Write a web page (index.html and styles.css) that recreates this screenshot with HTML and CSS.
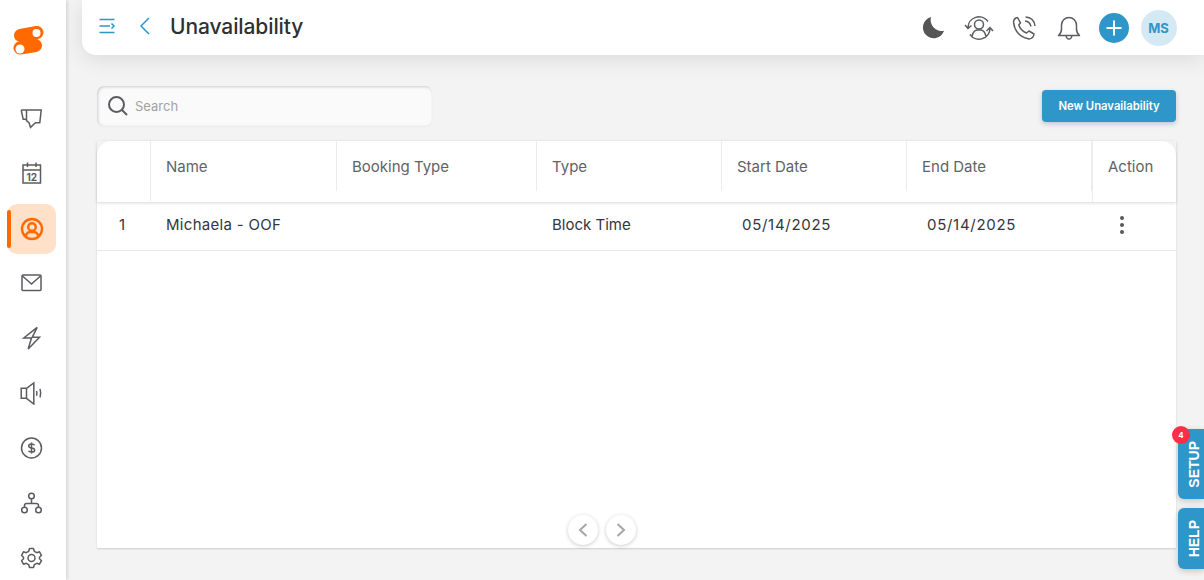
FILE: index.html
```html
<!DOCTYPE html>
<html lang="en">
<head>
<meta charset="utf-8">
<title>Unavailability</title>
<link rel="stylesheet" href="styles.css">
</head>
<body>
<div class="app">
  <nav class="sidebar">
    <div class="logo">
      <svg width="32" height="32" viewBox="0 0 32 32"><path class="logo-s" d="M8.500 10.500 L25 7.500 M8 23 L23.500 20.500"/><circle class="logo-dot" cx="24.500" cy="8" r="4"/><circle class="logo-dot" cx="8" cy="24" r="4.500"/></svg>
    </div>
    <ul class="nav-list">
      <li class="nav-item"><svg class="ic" width="24" height="24" viewBox="0 0 24 24"><path d="M1.200 5 H21.200 L19.800 17.700 H15.500 L10.500 22.300 L9 17.700 L6.500 15.700 V5 M1.200 5 L3.200 14.300 H6.500"/></svg></li>
      <li class="nav-item"><svg class="ic" width="24" height="24" viewBox="0 0 24 24"><rect x="3" y="5" width="17.500" height="18"/><path d="M3 10 H20.500 M7.500 2.500 V7 M16 2.500 V7"/><text class="cal-num" x="11.800" y="20.500">12</text></svg></li>
      <li class="nav-item active"><span class="active-bar"></span><svg class="ic ic-active" width="24" height="24" viewBox="0 0 24 24"><circle cx="12" cy="12" r="10"/><circle cx="12" cy="10" r="3.800"/><path d="M5.500 19.500 Q6.500 15.500 10 15 H14 Q17.500 15.500 18.500 19.500"/></svg></li>
      <li class="nav-item"><svg class="ic" width="24" height="24" viewBox="0 0 24 24"><rect x="2" y="4" width="19" height="15.500" rx="1"/><path d="M2.500 5 L11.500 13 L20.500 5"/></svg></li>
      <li class="nav-item"><svg class="ic" width="24" height="24" viewBox="0 0 24 24"><path d="M17.200 1.300 L3.800 12 H11.500 L8.200 23 L19.500 11.300 H12.200 Z"/></svg></li>
      <li class="nav-item"><svg class="ic" width="24" height="24" viewBox="0 0 24 24"><path d="M1.200 7.300 H6.500 V17.300 H1.200 Z M6.500 7.300 L13.800 2 V23 L6.500 17.300"/><path d="M16.500 10 Q17.500 12.300 16.500 14.800 M20 8 Q21.500 12.300 20 16.500"/></svg></li>
      <li class="nav-item"><svg class="ic" width="24" height="24" viewBox="0 0 24 24"><circle cx="11.500" cy="12" r="10"/><path d="M14.500 9.300 Q14 8 11.500 8 Q8.700 8 8.700 10 Q8.700 11.700 11.500 12 Q14.700 12.400 14.700 14.200 Q14.700 16 11.500 16 Q9 16 8.500 14.800 M11.500 6.500 V17.500"/></svg></li>
      <li class="nav-item"><svg class="ic" width="24" height="24" viewBox="0 0 24 24"><circle cx="11.500" cy="5" r="2.800"/><circle cx="4.500" cy="19" r="2.800"/><circle cx="18.500" cy="19" r="2.800"/><path d="M11.500 8 V12.500 M4.500 16 V14.500 Q4.500 12.500 6.700 12.500 H16.300 Q18.500 12.500 18.500 14.500 V16"/></svg></li>
      <li class="nav-item"><svg class="ic ic-round" width="24" height="24" viewBox="0 0 24 24"><circle cx="11.500" cy="12" r="3.500"/><path d="M9.500 2.500 H13.500 L14.300 5.300 L16.800 6.700 L19.500 5.800 L21.500 9.300 L19.500 11.300 V12.700 L21.500 14.700 L19.500 18.200 L16.800 17.300 L14.300 18.700 L13.500 21.500 H9.500 L8.700 18.700 L6.200 17.300 L3.500 18.200 L1.500 14.700 L3.500 12.700 V11.300 L1.500 9.300 L3.500 5.800 L6.200 6.700 L8.700 5.300 Z"/></svg></li>
    </ul>
  </nav>

  <div class="main">
    <header class="topbar">
      <div class="topbar-left">
        <svg class="ic-blue" width="18" height="18" viewBox="0 0 18 18"><path d="M1.500 2.500 H16.500 M1.500 9 H12 M1.500 15.500 H16.500 M13.500 6.500 L16 9 L13.500 11.500"/></svg>
        <svg class="ic-blue back" width="14" height="20" viewBox="0 0 14 20"><path d="M11 2 L3 10 L11 18"/></svg>
        <h1 class="page-title">Unavailability</h1>
      </div>
      <div class="topbar-right">
        <span class="slot"><svg width="23" height="23" viewBox="0 0 24 24"><path class="moon" d="M9.500 1 A11.500 11.500 0 0 0 23 15.500 A11.300 11.300 0 1 1 9.500 1Z"/></svg></span>
        <span class="slot"><svg class="ic" width="30" height="26" viewBox="0 0 30 26"><circle cx="15" cy="9.500" r="4.500"/><path d="M8 22 Q9 15.500 13 15 H17 Q21 15.500 22 22 M4 13 A11 11 0 0 1 24 6.500 M26 13 A11 11 0 0 1 6 19.500 M1 10 L4 13.500 L7.500 10.500 M22.500 16 L26 12.500 L29 16"/></svg></span>
        <span class="slot"><svg class="ic" width="26" height="26" viewBox="0 0 26 26"><path class="join-round" d="M6.500 2.500 L9.500 7.800 L7.800 10 Q9.500 15.500 15.500 18 L18 16 L23 19 Q22.500 23.500 18 24 Q4 21 2.500 7 Q3 3 6.500 2.500Z"/><path d="M14 6 Q19 6.500 20 11.500 M14.500 2 Q23 2.500 24 11"/></svg></span>
        <span class="slot"><svg class="ic" width="24" height="26" viewBox="0 0 24 26"><path class="join-round" d="M1.500 20.500 H22.500 Q19.500 18 19.500 14 V10 A7.500 7.500 0 0 0 4.500 10 V14 Q4.500 18 1.500 20.500Z M9 20.500 Q9.500 24 12 24 Q14.500 24 15 20.500"/></svg></span>
        <span class="slot"><button class="add-btn" type="button"><svg width="16" height="16" viewBox="0 0 16 16"><path d="M8 0.500 V15.500 M0.500 8 H15.500"/></svg></button></span>
        <span class="slot"><span class="avatar">MS</span></span>
      </div>
    </header>

    <section class="content">
      <div class="toolbar">
        <label class="search">
          <svg class="ic ic-search" width="22" height="22" viewBox="0 0 22 22"><circle cx="9.500" cy="9.500" r="7.500"/><path d="M15 15 L20 20"/></svg>
          <span class="search-text">Search</span>
        </label>
        <button class="primary-btn" type="button">New Unavailability</button>
      </div>

      <div class="table-card">
        <div class="row head">
          <div class="cell c-idx"></div>
          <div class="cell c-name">Name</div>
          <div class="cell c-book">Booking Type</div>
          <div class="cell c-type">Type</div>
          <div class="cell c-date">Start Date</div>
          <div class="cell c-date">End Date</div>
          <div class="cell c-act">Action</div>
        </div>
        <div class="row body">
          <div class="cell c-idx">1</div>
          <div class="cell c-name name-val">Michaela - OOF</div>
          <div class="cell c-book"></div>
          <div class="cell c-type">Block Time</div>
          <div class="cell c-date date-val">05/14/2025</div>
          <div class="cell c-date date-val">05/14/2025</div>
          <div class="cell c-act"><span class="dots"><i></i><i></i><i></i></span></div>
        </div>
        <div class="pager">
          <button class="pager-btn" type="button"><svg width="12" height="16" viewBox="0 0 12 16"><path d="M9.500 2 L3 8 L9.500 14"/></svg></button>
          <button class="pager-btn" type="button"><svg width="12" height="16" viewBox="0 0 12 16"><path d="M2.500 2 L9 8 L2.500 14"/></svg></button>
        </div>
      </div>
    </section>
  </div>

  <button class="side-tab tab-setup" type="button"><span>SETUP</span><b class="badge">4</b></button>
  <button class="side-tab tab-help" type="button"><span>HELP</span></button>
</div>
</body>
</html>
```

FILE: styles.css
```css
* { box-sizing: border-box; }
html, body { margin: 0; height: 100%; overflow: hidden; }
body {
  background: #f3f3f3;
  font-family: Inter, "Open Sans", sans-serif;
  color: #333a42;
}
button { font-family: inherit; border: 0; padding: 0; }

.app { position: relative; display: flex; height: 580px; overflow: hidden; }

svg path, svg circle, svg rect { fill: none; }

.sidebar {
  flex: 0 0 66px;
  background: #fff;
  box-shadow: 1px 0 4px rgba(0, 0, 0, .16);
  z-index: 2;
  padding-top: 25px;
  display: flex;
  flex-direction: column;
}
.logo { display: flex; justify-content: center; padding-right: 11px; height: 32px; margin-bottom: 32px; }
.logo svg .logo-s { stroke: #ff6a00; stroke-width: 13; stroke-linecap: round; }
.logo svg .logo-dot { fill: #fff; }

.nav-list { list-style: none; margin: 0; padding: 0; display: flex; flex-direction: column; }
.nav-item {
  position: relative;
  height: 55px;
  margin: 0 10px 0 7px;
  display: flex;
  align-items: center;
  justify-content: center;
  flex: 0 0 55px;
}
.nav-item.active { background: #ffe0c8; border-radius: 10px; height: 50px; flex-basis: 50px; margin-top: 5px; margin-bottom: 1px; }
.active-bar { position: absolute; left: 0; top: 6px; width: 4px; height: 38px; background: #ff6a00; border-radius: 2px; }

.ic path, .ic circle, .ic rect { stroke: #5a5c60; stroke-width: 1.500; }
.ic-round path, .join-round { stroke-linejoin: round; }
.ic-active path, .ic-active circle { stroke: #ff6a00; stroke-width: 2.400; }
.ic-search path, .ic-search circle { stroke-width: 2; }
.cal-num { font-size: 10px; font-weight: 700; fill: #5a5c60; text-anchor: middle; }

.main { flex: 1; min-width: 0; display: flex; flex-direction: column; }

.topbar {
  margin-left: 16px;
  height: 55px;
  background: #fff;
  border-bottom-left-radius: 14px;
  box-shadow: 0 4px 22px rgba(0, 0, 0, .1);
  display: flex;
  align-items: center;
  justify-content: space-between;
  padding: 0 23px 0 16px;
}
.topbar-left { display: flex; align-items: center; padding-bottom: 3px; }
.ic-blue path { stroke: #2e96c9; stroke-width: 1.500; }
.back { margin-left: 22px; }
.page-title { margin: 0 0 0 18px; font-size: 21px; font-weight: 500; color: #2f3033; letter-spacing: -.1px; }
.topbar-right { display: flex; align-items: center; }
.slot { width: 45px; display: flex; align-items: center; justify-content: center; }
.topbar-right .moon { fill: #555; }
.add-btn { width: 30px; height: 30px; border-radius: 50%; background: #2e96c9; display: flex; align-items: center; justify-content: center; }
.add-btn path { stroke: #fff; stroke-width: 2; }
.avatar { flex: 0 0 36px; height: 36px; border-radius: 50%; background: #d5e9f5; color: #2e96c9; font-size: 13px; font-weight: 700; display: flex; align-items: center; justify-content: center; }

.content { flex: 1; padding: 31px 28px 32px 31px; display: flex; flex-direction: column; min-height: 0; }
.toolbar { display: flex; justify-content: space-between; align-items: center; height: 40px; margin-bottom: 15px; }
.search {
  width: 335px;
  height: 40px;
  display: flex;
  align-items: center;
  gap: 6px;
  padding-left: 10px;
  background: #fafafa;
  border-radius: 7px;
  box-shadow: inset 1px 1px 3px rgba(0, 0, 0, .18), 0 1px 2px rgba(0, 0, 0, .04);
}
.search-text { font-size: 13px; color: #a2a2a2; }
.primary-btn {
  width: 134px;
  height: 32px;
  margin-left: auto;
  background: #2e96c9;
  color: #fff;
  font-size: 11.300px;
  font-weight: 600;
  border-radius: 4px;
  box-shadow: 0 2px 5px rgba(50, 60, 120, .25);
}

.table-card {
  flex: 1;
  position: relative;
  background: #fff;
  border-radius: 14px 14px 0 0;
  box-shadow: 0 1px 2px rgba(0, 0, 0, .16);
  display: flex;
  flex-direction: column;
  min-height: 0;
}
.row { display: flex; }
.head { height: 61px; box-shadow: 0 1px 3px rgba(0, 0, 0, .16); color: #5f6368; }
.body { height: 49px; border-bottom: 1px solid #e8e8e8; color: #33363c; }
.body .cell { padding-bottom: 3px; }
.cell { font-size: 15px; display: flex; align-items: center; padding-left: 15px; }
.head .cell { padding-bottom: 10px; position: relative; }
.head .cell::after { content: ""; position: absolute; right: 0; top: 0; height: 50px; width: 1px; background: #ececec; }
.head .c-idx::after { height: 60px; }
.head .c-act::after { display: none; }
.head .c-act { border-left: 1px solid #ececec; padding-left: 15px; }
.c-idx { flex: 0 0 54px; }
.body .c-idx { padding-left: 22px; }
.c-name { flex: 0 0 186px; }
.name-val { letter-spacing: .3px; }
.c-book { flex: 0 0 200px; }
.c-type { flex: 0 0 185px; }
.c-date { flex: 0 0 185px; }
.c-act { flex: 1; }
.date-val { padding-left: 20px; letter-spacing: .7px; }
.dots { display: flex; flex-direction: column; gap: 3px; margin-left: 13px; }
.dots i { display: block; width: 4px; height: 4px; border-radius: 50%; background: #55585c; }

.pager { margin-top: auto; display: flex; justify-content: center; gap: 8px; padding: 0 69px 3px 0; }
.pager-btn { width: 30px; height: 30px; border-radius: 50%; background: #fff; box-shadow: 0 1px 4px rgba(0, 0, 0, .2); display: flex; align-items: center; justify-content: center; }
.pager-btn path { stroke: #a6a6a6; stroke-width: 2; }

.side-tab {
  position: absolute;
  right: 0;
  width: 26px;
  background: #2e96c9;
  border-radius: 6px 0 0 6px;
  color: #fff;
  font-weight: 700;
  padding-left: 5px;
  box-shadow: 0 2px 6px rgba(0, 0, 0, .2);
  display: flex;
  align-items: center;
  justify-content: center;
  z-index: 3;
}
.side-tab span { writing-mode: vertical-rl; transform: rotate(180deg); font-family: "Liberation Sans", sans-serif; font-size: 14px; }
.tab-setup { top: 429px; height: 70px; }
.tab-help { top: 508px; height: 61px; }
.badge { position: absolute; left: -6px; top: -3px; width: 18px; height: 18px; border-radius: 50%; background: #ff2d46; color: #fff; font-size: 8px; font-weight: 700; display: flex; align-items: center; justify-content: center; }
```
